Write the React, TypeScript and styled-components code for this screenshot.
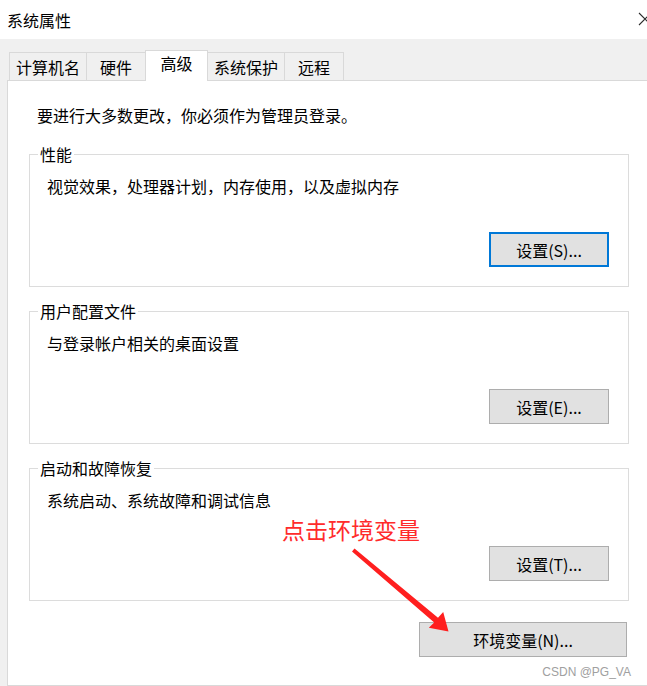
import React from 'react';
import styled, { createGlobalStyle } from 'styled-components';

const GlobalStyle = createGlobalStyle`
  html, body {
    margin: 0;
    padding: 0;
    background: #f0f0f0;
  }

  body {
    font-family: 'Noto Sans CJK SC', 'Microsoft YaHei', sans-serif;
    color: #000;
  }
`;

const Window = styled.div`
  position: relative;
  width: 647px;
  height: 686px;
  overflow: hidden;
  background: #f0f0f0;
  display: flex;
  flex-direction: column;
`;

const TitleBar = styled.header`
  flex-shrink: 0;
  height: 39px;
  background: #fff;
  display: flex;
  align-items: center;
  justify-content: space-between;
  padding-left: 7px;
  font-size: 16px;
  line-height: 20px;
`;

const CloseIcon = styled.svg`
  align-self: flex-start;
  flex-shrink: 0;
  margin: 12px -5px 0 0;
`;

const TabStrip = styled.nav`
  position: relative;
  z-index: 1;
  display: flex;
  align-items: flex-end;
  height: 30px;
  margin: 11px 0 0 9px;
`;

interface TabProps {
  $active?: boolean;
}

const Tab = styled.div<TabProps>`
  position: relative;
  z-index: ${({ $active }) => ($active ? 2 : 1)};
  box-sizing: border-box;
  display: flex;
  justify-content: center;
  height: ${({ $active }) => ($active ? '31px' : '28px')};
  min-width: ${({ $active }) => ($active ? '63px' : '60px')};
  margin: 0 -1px ${({ $active }) => ($active ? '-1px' : '0')} 0;
  padding: ${({ $active }) => ($active ? '3px' : '5px')} 6px 0;
  border: 1px solid #d9d9d9;
  border-bottom: none;
  background: ${({ $active }) => ($active ? '#fff' : '#f0f0f0')};
  font-size: 16px;
  line-height: 18px;
  white-space: nowrap;
`;

const Panel = styled.main`
  flex: 1;
  box-sizing: border-box;
  width: 700px;
  margin-left: 7px;
  padding: 24px 0 0 21px;
  border: 1px solid #d9d9d9;
  background: #fff;
`;

const Column = styled.div`
  width: 600px;
  display: flex;
  flex-direction: column;
`;

const Intro = styled.p`
  margin: 0 0 0 8px;
  font-size: 16px;
  line-height: 20px;
`;

const GroupList = styled.div`
  display: flex;
  flex-direction: column;
  gap: 24px;
  margin-top: 29px;
`;

const GroupBox = styled.section`
  position: relative;
  box-sizing: border-box;
  height: 133px;
  display: flex;
  flex-direction: column;
  padding: 21px 19px 19px 17px;
  border: 1px solid #dcdcdc;
`;

const GroupTitle = styled.span`
  position: absolute;
  top: -10px;
  left: 8px;
  padding: 0 2px;
  background: #fff;
  font-size: 16px;
  line-height: 18px;
`;

const GroupText = styled.div`
  font-size: 16px;
  line-height: 20px;
`;

interface ButtonProps {
  $primary?: boolean;
  $width: number;
}

const Button = styled.button<ButtonProps>`
  box-sizing: border-box;
  align-self: flex-end;
  width: ${({ $width }) => $width}px;
  height: 35px;
  margin-top: auto;
  padding: 0;
  border: ${({ $primary }) => ($primary ? '2px solid #0078d7' : '1px solid #adadad')};
  background: #e1e1e1;
  color: #000;
  font-family: inherit;
  font-size: 16px;
  line-height: 20px;
`;

const EnvButton = styled(Button)`
  margin: 21px 2px 0 0;
`;

const Callout = styled.div`
  position: absolute;
  left: 282px;
  top: 516px;
  color: #ff2b2b;
  font-size: 23px;
  line-height: 27px;
  white-space: nowrap;
`;

const Arrow = styled.svg`
  position: absolute;
  left: 350px;
  top: 545px;
`;

const Watermark = styled.div`
  position: absolute;
  right: 16px;
  bottom: 7px;
  color: #a0a0a0;
  font-family: 'Liberation Sans', Arial, sans-serif;
  font-size: 12px;
  line-height: 14px;
`;

const tabs = ['计算机名', '硬件', '高级', '系统保护', '远程'];

const groups = [
  { title: '性能', text: '视觉效果，处理器计划，内存使用，以及虚拟内存', button: '设置(S)...', primary: true },
  { title: '用户配置文件', text: '与登录帐户相关的桌面设置', button: '设置(E)...', primary: false },
  { title: '启动和故障恢复', text: '系统启动、系统故障和调试信息', button: '设置(T)...', primary: false },
];

const App = () => (
  <>
    <GlobalStyle />
    <Window>
      <TitleBar>
        <span>系统属性</span>
        <CloseIcon width="14" height="14" viewBox="0 0 14 14">
          <path d="M1 1 L13 13 M13 1 L1 13" stroke="#2b2b2b" strokeWidth="1.1" fill="none" />
        </CloseIcon>
      </TitleBar>

      <TabStrip>
        {tabs.map((t) => (
          <Tab key={t} $active={t === '高级'}>
            {t}
          </Tab>
        ))}
      </TabStrip>

      <Panel>
        <Column>
          <Intro>要进行大多数更改，你必须作为管理员登录。</Intro>
          <GroupList>
            {groups.map((g) => (
              <GroupBox key={g.title}>
                <GroupTitle>{g.title}</GroupTitle>
                <GroupText>{g.text}</GroupText>
                <Button $width={120} $primary={g.primary}>
                  {g.button}
                </Button>
              </GroupBox>
            ))}
          </GroupList>
          <EnvButton $width={208}>环境变量(N)...</EnvButton>
        </Column>
      </Panel>

      <Callout>点击环境变量</Callout>
      <Arrow width="100" height="90" viewBox="350 545 100 90">
        <polygon
          fill="#ff1f1f"
          points="354.5,548.5 438,617.7 443.2,612 448.5,631.5 428.8,627.8 434.2,622.6 352,551.5"
        />
      </Arrow>
      <Watermark>CSDN @PG_VA</Watermark>
    </Window>
  </>
);

export default App;
